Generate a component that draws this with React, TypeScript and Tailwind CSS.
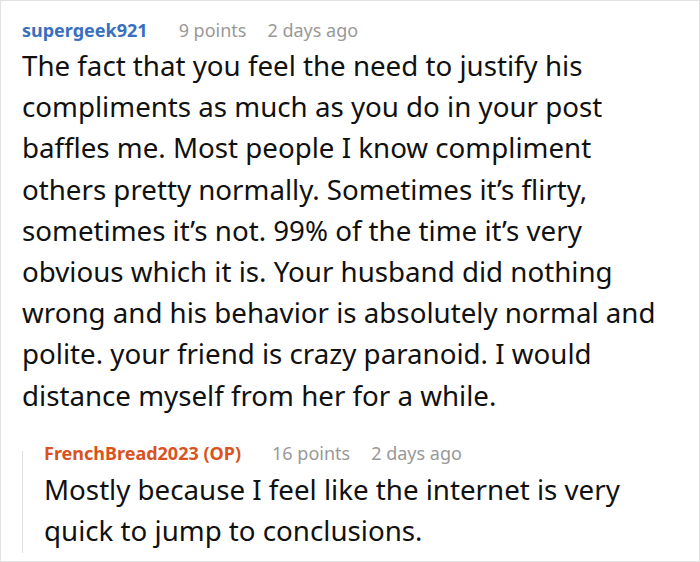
import React from "react";

export default function App() {
  return (
    <div className="w-[700px] h-[562px] bg-white border border-[#e2e2e2] overflow-hidden" style={{ fontFamily: '"Noto Sans", sans-serif' }}>
      <div className="pl-[21px] pr-3 pt-[17px]">
        <div className="flex items-baseline text-[18px] leading-[24px]">
          <span className="font-bold text-[#3a6fc0]">supergeek921</span>
          <span className="ml-[31px] text-[#999999]">9 points</span>
          <span className="ml-[21px] text-[#999999]">2 days ago</span>
        </div>
        <p className="mt-[3px] max-w-[648px] text-[27.7px] leading-[41.2px] text-[#111111]">
          The fact that you feel the need to justify his compliments as much as you do in your post baffles me. Most people I know compliment others pretty normally. Sometimes it’s flirty, sometimes it’s not. 99% of the time it’s very obvious which it is. Your husband did nothing wrong and his behavior is absolutely normal and polite. your friend is crazy paranoid. I would distance myself from her for a while.
        </p>
        <div className="mt-[25px] flex">
          <div className="w-px mt-[10px] bg-[#e0e0e0] shrink-0" />
          <div className="pl-[21px] pb-[2px]">
            <div className="flex items-baseline text-[18px] leading-[24px]">
              <span className="font-bold text-[#d9531e]">FrenchBread2023 (OP)</span>
              <span className="ml-[31px] text-[#999999]">16 points</span>
              <span className="ml-[21px] text-[#999999]">2 days ago</span>
            </div>
            <p className="mt-[4px] text-[27.7px] leading-[41px] text-[#111111]">
              Mostly because I feel like the internet is very quick to jump to conclusions.
            </p>
          </div>
        </div>
      </div>
    </div>
  );
}
